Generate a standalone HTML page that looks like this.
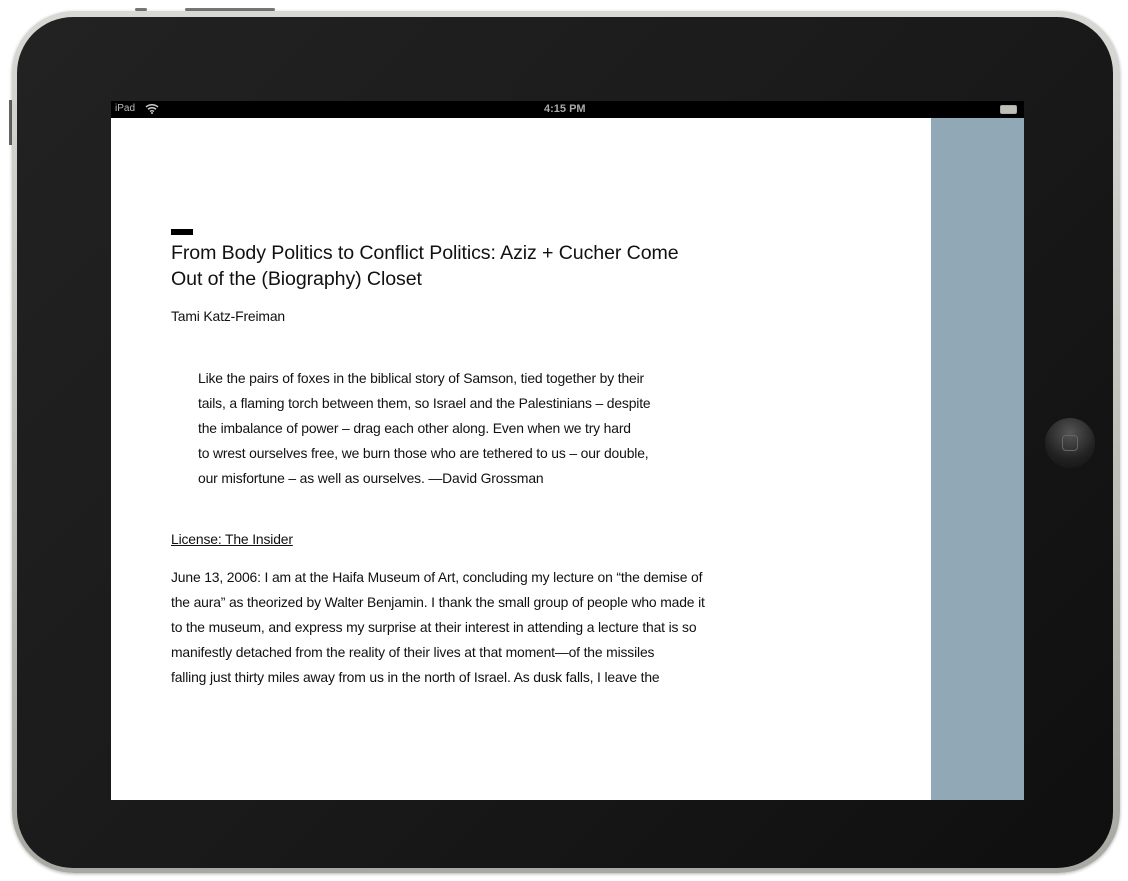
<!DOCTYPE html>
<html><head><meta charset="utf-8"><style>
html,body{margin:0;padding:0;background:#fff;width:1128px;height:881px;overflow:hidden;position:relative;font-family:"Liberation Sans",sans-serif}
.frame{position:absolute;left:12px;top:11px;width:1108px;height:862px;border-radius:62px;background:linear-gradient(#d8d8d4,#a9a9a3);box-shadow:0 1px 3px rgba(0,0,0,.3)}
.bezel{position:absolute;left:17px;top:17px;width:1096px;height:851px;border-radius:56px;background:linear-gradient(135deg,#222,#1a1a1a 50%,#0f0f0f);}
.btn{position:absolute;top:8px;height:3px;background:#777;border-radius:2px}
.side{position:absolute;left:9px;top:100px;width:3px;height:45px;background:#666}
.status{position:absolute;left:111px;top:101px;width:913px;height:17px;background:#000;color:#bbb;font-size:11px}
.screen{position:absolute;left:111px;top:118px;width:913px;height:682px;background:#fff}
.blue{position:absolute;left:931px;top:118px;width:93px;height:682px;background:#91a9b6}
.home{position:absolute;left:1045px;top:418px;width:50px;height:50px;border-radius:50%;background:radial-gradient(circle at 50% 30%,#555,#222 60%,#111);}
.home:after{content:"";position:absolute;left:17px;top:17px;width:14px;height:14px;border:1.5px solid #666;border-radius:4px}
.t{position:absolute;white-space:nowrap;color:#111}
.h{font-size:19.6px;letter-spacing:-0.1px}
.b{font-size:13.9px;letter-spacing:-0.15px}
</style></head><body>
<div class="btn" style="left:135px;width:12px"></div>
<div class="btn" style="left:185px;width:90px"></div>
<div class="side"></div>
<div class="frame"></div>
<div class="bezel"></div>
<div class="status">
 <span style="position:absolute;left:4px;top:2px;font-size:10px">iPad</span>
 <svg style="position:absolute;left:34px;top:2px" width="14" height="11" viewBox="0 0 14 11"><path d="M1 4a9 9 0 0 1 12 0M3 6.3a6 6 0 0 1 8 0M5 8.5a3 3 0 0 1 4 0" stroke="#ccc" stroke-width="1.5" fill="none"/><circle cx="7" cy="10" r="1" fill="#ccc"/></svg>
 <span style="position:absolute;left:433px;top:2px;font-weight:bold;color:#aaa">4:15 PM</span>
 <div style="position:absolute;left:889px;top:4px;width:15px;height:7px;border:1px solid #aaa;border-radius:2px;background:#bcc0b5"></div>
</div>
<div class="screen"></div>
<div class="blue"></div>
<div class="home"></div>
<div style="position:absolute;left:171px;top:229px;width:22px;height:6px;background:#000"></div>
<div class="t h" style="left:171px;top:242px">From Body Politics to Conflict Politics: Aziz + Cucher Come</div>
<div class="t h" style="left:171px;top:268px">Out of the (Biography) Closet</div>
<div class="t b" style="left:171px;top:308px">Tami Katz-Freiman</div>
<div class="t b" style="left:198px;top:370px">Like the pairs of foxes in the biblical story of Samson, tied together by their</div>
<div class="t b" style="left:198px;top:395px">tails, a flaming torch between them, so Israel and the Palestinians – despite</div>
<div class="t b" style="left:198px;top:420px">the imbalance of power – drag each other along. Even when we try hard</div>
<div class="t b" style="left:198px;top:445px">to wrest ourselves free, we burn those who are tethered to us – our double,</div>
<div class="t b" style="left:198px;top:470px">our misfortune – as well as ourselves. —David Grossman</div>
<div class="t b" style="left:171px;top:531px;text-decoration:underline">License: The Insider</div>
<div class="t b" style="left:171px;top:569px">June 13, 2006: I am at the Haifa Museum of Art, concluding my lecture on “the demise of</div>
<div class="t b" style="left:171px;top:594px">the aura” as theorized by Walter Benjamin. I thank the small group of people who made it</div>
<div class="t b" style="left:171px;top:619px">to the museum, and express my surprise at their interest in attending a lecture that is so</div>
<div class="t b" style="left:171px;top:644px">manifestly detached from the reality of their lives at that moment—of the missiles</div>
<div class="t b" style="left:171px;top:669px">falling just thirty miles away from us in the north of Israel. As dusk falls, I leave the</div>
</body></html>
